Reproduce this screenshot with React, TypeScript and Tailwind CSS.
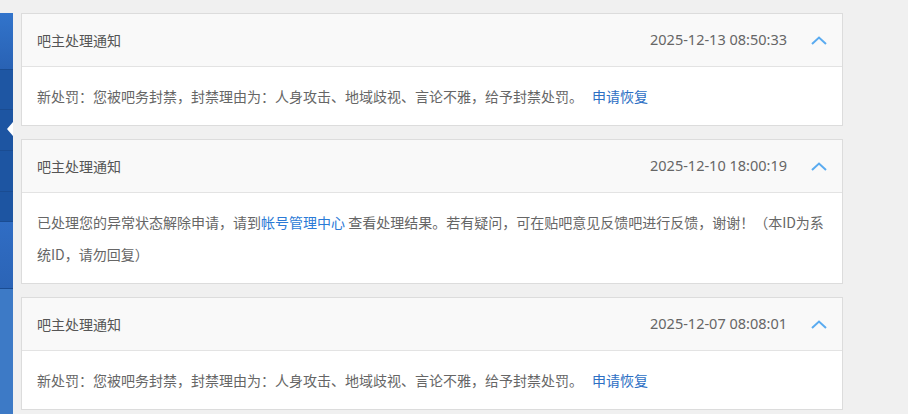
import React from "react";

type Notice = {
  id: number;
  title: string;
  time: string;
  body: React.ReactNode;
};

const Chevron = () => (
  <svg width="16" height="9" viewBox="0 0 16 9" fill="none" className="shrink-0">
    <path d="M1 8 L8 1.5 L15 8" stroke="#5aabf0" strokeWidth="2" />
  </svg>
);

const notices: Notice[] = [
  {
    id: 1,
    title: "吧主处理通知",
    time: "2025-12-13 08:50:33",
    body: (
      <>
        新处罚：您被吧务封禁，封禁理由为：人身攻击、地域歧视、言论不雅，给予封禁处罚。
        <a className="ml-[9px] text-[#2d6fc4]">申请恢复</a>
      </>
    ),
  },
  {
    id: 2,
    title: "吧主处理通知",
    time: "2025-12-10 18:00:19",
    body: (
      <>
        已处理您的异常状态解除申请，请到<a className="text-[#2b7ad6]">帐号管理中心</a> 查看处理结果。若有疑问，可在贴吧意见反馈吧进行反馈，谢谢！（本ID为系统ID，请勿回复）
      </>
    ),
  },
  {
    id: 3,
    title: "吧主处理通知",
    time: "2025-12-07 08:08:01",
    body: (
      <>
        新处罚：您被吧务封禁，封禁理由为：人身攻击、地域歧视、言论不雅，给予封禁处罚。
        <a className="ml-[9px] text-[#2d6fc4]">申请恢复</a>
      </>
    ),
  },
];

// sidebar menu strip, heights read off the screenshot
const menu = [
  { h: 57, bg: "bg-gradient-to-b from-[#3274cb] to-[#2962b4]" },
  { h: 40, bg: "bg-[#1e56a3]" },
  { h: 41, bg: "bg-[#1d55a2]", active: true },
  { h: 41, bg: "bg-[#1d55a2]" },
  { h: 30, bg: "bg-[#1d55a2]" },
  { h: 67, bg: "bg-gradient-to-b from-[#306dc4] to-[#2b64b6]" },
  { h: 140, bg: "bg-[#3d7ac6]" },
];

export default function App() {
  return (
    <div
      className="w-[908px] h-[414px] overflow-hidden bg-[#f0f0f0] flex gap-[8px] pt-[13px]"
      style={{ fontFamily: '"Noto Sans CJK SC", "Noto Sans", sans-serif' }}
    >
      <nav className="w-[13px] shrink-0 flex flex-col">
        {menu.map((m, i) => (
          <div
            key={i}
            className={`relative shrink-0 border-b border-[#1a4c92] ${m.bg}`}
            style={{ height: m.h }}
          >
            {m.active && (
              <span className="absolute right-0 top-[12px] w-0 h-0 border-y-[7px] border-y-transparent border-r-[6px] border-r-white" />
            )}
          </div>
        ))}
      </nav>

      <div className="w-[822px] shrink-0 flex flex-col gap-[13px]">
        {notices.map((n) => (
          <div key={n.id} className="border border-[#dcdcdc] bg-white">
            <div className="h-[53px] flex items-center justify-between pl-[15px] pr-[15px] bg-[#f9f9f9] border-b border-[#e3e3e3]">
              <span className="text-[14px] text-[#555]">{n.title}</span>
              <div className="flex items-center gap-[24px]">
                <span
                  className="text-[14.5px] text-[#666]"
                  style={{ fontFamily: '"Noto Sans", "Noto Sans CJK SC", sans-serif' }}
                >
                  {n.time}
                </span>
                <Chevron />
              </div>
            </div>
            <div className="pl-[15px] pr-[15px] py-[13px] text-[14px] leading-[32px] text-[#666]">
              {n.body}
            </div>
          </div>
        ))}
      </div>
    </div>
  );
}
